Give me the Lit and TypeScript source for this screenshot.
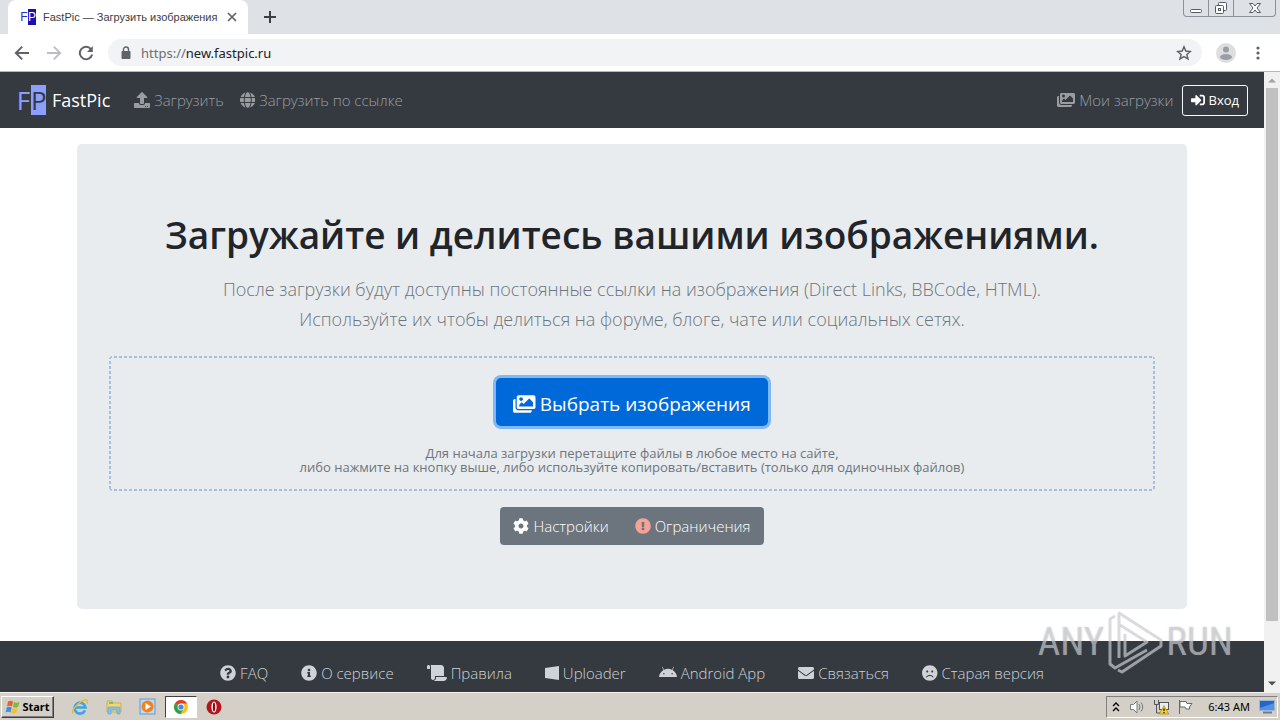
import { LitElement, html, css, svg } from "lit";
import { customElement, property } from "lit/decorators.js";

interface Glyph {
  w: number;
  d: string;
}

const GLYPHS: Record<string, Glyph> = {
  upload: {
    w: 512,
    d: "M296 384h-80c-13.3 0-24-10.7-24-24V192h-87.7c-17.8 0-26.7-21.5-14.1-34.1L242.3 5.7c7.5-7.5 19.8-7.5 27.3 0l152.2 152.2c12.6 12.6 3.7 34.1-14.1 34.1H320v168c0 13.3-10.7 24-24 24zm216-8v112c0 13.3-10.7 24-24 24H24c-13.3 0-24-10.7-24-24V376c0-13.3 10.7-24 24-24h136v8c0 30.9 25.1 56 56 56h80c30.9 0 56-25.1 56-56v-8h136c13.3 0 24 10.7 24 24zm-124 88c0-11-9-20-20-20s-20 9-20 20 9 20 20 20 20-9 20-20zm64 0c0-11-9-20-20-20s-20 9-20 20 9 20 20 20 20-9 20-20z",
  },
  globe: {
    w: 496,
    d: "M336.5 160C322 70.7 287.8 8 248 8s-74 62.7-88.5 152h177zM152 256c0 22.2 1.2 43.5 3.3 64h185.3c2.1-20.5 3.3-41.8 3.3-64s-1.2-43.5-3.3-64H155.3c-2.1 20.5-3.3 41.8-3.3 64zm324.7-96c-28.6-67.9-86.5-120.4-158-141.6 24.4 33.8 41.2 84.7 50 141.6h108zM177.2 18.4C105.8 39.6 47.8 92.1 19.3 160h108c8.7-56.9 25.5-107.8 49.9-141.6zM487.4 192H372.7c2.1 21 3.3 42.5 3.3 64s-1.2 43-3.3 64h114.6c5.5-20.5 8.6-41.8 8.6-64s-3.1-43.5-8.5-64zM120 256c0-21.5 1.2-43 3.3-64H8.6C3.2 212.5 0 233.8 0 256s3.2 43.5 8.6 64h114.6c-2-21-3.2-42.5-3.2-64zm39.5 96c14.5 89.3 48.7 152 88.5 152s74-62.7 88.5-152h-177zm159.3 141.6c71.4-21.2 129.4-73.7 158-141.6h-108c-8.8 56.9-25.6 107.8-50 141.6zM19.3 352c28.6 67.9 86.5 120.4 158 141.6-24.4-33.8-41.2-84.7-50-141.6h-108z",
  },
  images: {
    w: 576,
    d: "M480 416v16c0 26.51-21.49 48-48 48H48c-26.51 0-48-21.49-48-48V176c0-26.51 21.49-48 48-48h16v208c0 44.112 35.888 80 80 80h336zm96-80V80c0-26.51-21.49-48-48-48H144c-26.51 0-48 21.49-48 48v256c0 26.51 21.49 48 48 48h384c26.51 0 48-21.49 48-48zM256 128c0 26.51-21.49 48-48 48s-48-21.49-48-48 21.49-48 48-48 48 21.49 48 48zm-96 144l55.515-55.515c4.686-4.686 12.284-4.686 16.971 0L272 256l135.515-135.515c4.686-4.686 12.284-4.686 16.971 0L512 208v112H160v-48z",
  },
  login: {
    w: 512,
    d: "M416 448h-84c-6.6 0-12-5.4-12-12v-40c0-6.6 5.4-12 12-12h84c17.7 0 32-14.3 32-32V160c0-17.7-14.3-32-32-32h-84c-6.6 0-12-5.4-12-12V76c0-6.6 5.4-12 12-12h84c53 0 96 43 96 96v192c0 53-43 96-96 96zm-47-201L201 79c-15-15-41-4.5-41 17v96H24c-13.3 0-24 10.7-24 24v96c0 13.3 10.7 24 24 24h136v96c0 21.5 26 32 41 17l168-168c9.3-9.4 9.3-24.6 0-34z",
  },
  cog: {
    w: 512,
    d: "M487.4 315.7l-42.6-24.6c4.3-23.2 4.3-47 0-70.2l42.6-24.6c4.9-2.8 7.1-8.6 5.5-14-11.1-35.6-30-67.8-54.7-94.6-3.8-4.1-10-5.1-14.8-2.3L380.8 110c-17.9-15.4-38.5-27.3-60.8-35.1V25.8c0-5.6-3.9-10.5-9.4-11.7-36.7-8.2-74.3-7.8-109.2 0-5.5 1.2-9.4 6.1-9.4 11.7V75c-22.2 7.9-42.8 19.8-60.8 35.1L88.7 85.5c-4.9-2.8-11-1.9-14.8 2.3-24.7 26.7-43.6 58.9-54.7 94.6-1.7 5.4.6 11.2 5.5 14L67.3 221c-4.3 23.2-4.3 47 0 70.2l-42.6 24.6c-4.9 2.8-7.1 8.6-5.5 14 11.1 35.6 30 67.8 54.7 94.6 3.8 4.1 10 5.1 14.8 2.3l42.6-24.6c17.9 15.4 38.5 27.3 60.8 35.1v49.2c0 5.6 3.9 10.5 9.4 11.7 36.7 8.2 74.3 7.8 109.2 0 5.5-1.2 9.4-6.1 9.4-11.7v-49.2c22.2-7.9 42.8-19.8 60.8-35.1l42.6 24.6c4.9 2.8 11 1.9 14.8-2.3 24.7-26.7 43.6-58.9 54.7-94.6 1.5-5.5-.7-11.3-5.6-14.1zM256 336c-44.1 0-80-35.9-80-80s35.9-80 80-80 80 35.9 80 80-35.9 80-80 80z",
  },
  warning: {
    w: 512,
    d: "M504 256c0 136.997-111.043 248-248 248S8 392.997 8 256C8 119.083 119.043 8 256 8s248 111.083 248 248zm-248 50c-25.405 0-46 20.595-46 46s20.595 46 46 46 46-20.595 46-46-20.595-46-46-46zm-43.673-165.346l7.418 136c.347 6.364 5.609 11.346 11.982 11.346h48.546c6.373 0 11.635-4.982 11.982-11.346l7.418-136c.375-6.874-5.098-12.654-11.982-12.654h-63.383c-6.884 0-12.356 5.78-11.981 12.654z",
  },
  question: {
    w: 512,
    d: "M504 256c0 136.997-111.043 248-248 248S8 392.997 8 256C8 119.083 119.043 8 256 8s248 111.083 248 248zM262.655 90c-54.497 0-89.255 22.957-116.549 63.758-3.536 5.286-2.353 12.415 2.715 16.258l34.699 26.31c5.205 3.947 12.621 3.008 16.665-2.122 17.864-22.658 30.113-35.797 57.303-35.797 20.429 0 45.698 13.148 45.698 32.958 0 14.976-12.363 22.667-32.534 33.976C247.128 238.528 216 254.941 216 296v4c0 6.627 5.373 12 12 12h56c6.627 0 12-5.373 12-12v-1.333c0-28.462 83.186-29.647 83.186-106.667 0-58.002-60.165-102-116.531-102zM256 338c-25.365 0-46 20.635-46 46 0 25.364 20.635 46 46 46s46-20.636 46-46c0-25.365-20.635-46-46-46z",
  },
  info: {
    w: 512,
    d: "M256 8C119.043 8 8 119.083 8 256c0 136.997 111.043 248 248 248s248-111.003 248-248C504 119.083 392.957 8 256 8zm0 110c23.196 0 42 18.804 42 42s-18.804 42-42 42-42-18.804-42-42 18.804-42 42-42zm56 254c0 6.627-5.373 12-12 12h-88c-6.627 0-12-5.373-12-12v-24c0-6.627 5.373-12 12-12h12v-64h-12c-6.627 0-12-5.373-12-12v-24c0-6.627 5.373-12 12-12h64c6.627 0 12 5.373 12 12v100h12c6.627 0 12 5.373 12 12v24z",
  },
  scroll: {
    w: 640,
    d: "M48 0C21.53 0 0 21.53 0 48v64c0 8.84 7.16 16 16 16h80V48C96 21.53 74.47 0 48 0zm208 412.57V352h288V96c0-52.94-43.06-96-96-96H111.59C121.74 13.41 128 29.92 128 48v368c0 38.87 34.65 69.65 74.75 63.12C234.22 474 256 444.46 256 412.57zM288 384v32c0 52.93-43.06 96-96 96h336c61.86 0 112-50.14 112-112 0-8.84-7.16-16-16-16H288z",
  },
  windows: { w: 448, d: "M0 93.7L448 32v448L0 418.3z" },
  android: {
    w: 576,
    d: "M420.55,301.93a24,24,0,1,1,24-24,24,24,0,0,1-24,24m-265.1,0a24,24,0,1,1,24-24,24,24,0,0,1-24,24m273.7-144.48,47.94-83a10,10,0,1,0-17.27-10h0l-48.54,84.07a301.25,301.25,0,0,0-246.56,0L116.18,64.45a10,10,0,1,0-17.27,10h0l47.94,83C64.53,202.22,8.24,285.55,0,384H576c-8.24-98.45-64.54-181.78-146.85-226.55",
  },
  envelope: {
    w: 512,
    d: "M502.3 190.8c3.9-3.1 9.7-.2 9.7 4.7V400c0 26.5-21.5 48-48 48H48c-26.5 0-48-21.5-48-48V195.6c0-5 5.7-7.8 9.7-4.7 22.4 17.4 52.1 39.5 154.1 113.6 21.1 15.4 56.7 47.8 92.2 47.6 35.7.3 72-32.8 92.3-47.6 102-74.1 131.6-96.3 154-113.7zM256 320c23.2.4 56.6-29.2 73.4-41.4 132.7-96.3 142.8-104.7 173.4-128.7 5.8-4.5 9.2-11.5 9.2-18.9v-19c0-26.5-21.5-48-48-48H48c-26.5 0-48 21.5-48 48v19c0 7.4 3.4 14.3 9.2 18.9 30.6 23.9 40.7 32.4 173.4 128.7 16.8 12.2 50.2 41.8 73.4 41.4z",
  },
  frown: {
    w: 496,
    d: "M248 8C111 8 0 119 0 256s111 248 248 248 248-111 248-248S385 8 248 8zm80 168c17.7 0 32 14.3 32 32s-14.3 32-32 32-32-14.3-32-32 14.3-32 32-32zm-160 0c17.7 0 32 14.3 32 32s-14.3 32-32 32-32-14.3-32-32 14.3-32 32-32zm170.2 218.2C315.8 367.4 282.9 352 248 352s-67.8 15.4-90.2 42.2c-13.5 16.3-38.1-4.2-24.6-20.5C161.7 339.6 203.6 320 248 320s86.3 19.6 114.7 53.8c13.6 16.2-11 36.7-24.5 20.4z",
  },
};

@customElement("fa-icon")
class FaIcon extends LitElement {
  @property() name = "";
  static styles = css`
    :host {
      display: inline-flex;
      flex: none;
    }
    svg {
      display: block;
      height: 1em;
      fill: currentColor;
    }
  `;
  render() {
    const g = GLYPHS[this.name];
    return html`<svg viewBox="0 0 ${g.w} 512" aria-hidden="true">${svg`<path d=${g.d}></path>`}</svg>`;
  }
}

@customElement("browser-chrome")
class BrowserChrome extends LitElement {
  static styles = css`
    :host {
      display: block;
      flex: none;
      font-family: "Noto Sans", sans-serif;
    }
    button {
      border: 0;
      background: none;
      padding: 0;
      margin: 0;
      display: flex;
      align-items: center;
      justify-content: center;
      color: #5f6368;
      font: inherit;
    }
    svg {
      display: block;
    }
    .strip {
      display: flex;
      height: 34px;
      background: #dee1e6;
      padding-left: 8px;
    }
    .tab {
      display: flex;
      align-items: center;
      width: 240px;
      box-sizing: border-box;
      padding: 0 10px 0 12px;
      background: #fff;
      border-radius: 8px 8px 0 0;
      font-family: "Liberation Sans", sans-serif;
      font-size: 11px;
      color: #3c4043;
    }
    .favicon {
      display: flex;
      width: 16px;
      height: 16px;
      margin-right: 7px;
      font-size: 12px;
      line-height: 16px;
      color: #2a2ac0;
    }
    .favicon span {
      width: 8px;
      text-align: center;
    }
    .favicon .inv {
      background: #1a0fb0;
      color: #fff;
    }
    .title {
      flex: 1;
      white-space: nowrap;
    }
    .plus {
      width: 44px;
    }
    .wctl {
      display: flex;
      margin-left: auto;
      margin-right: 4px;
      height: 17px;
      box-sizing: border-box;
      border: 1px solid #8b9199;
      border-top: 0;
      border-radius: 0 0 4px 4px;
    }
    .wctl button {
      width: 25px;
      border-right: 1px solid #8b9199;
    }
    .wctl button:last-child {
      width: 41px;
      border-right: 0;
    }
    .bar {
      display: flex;
      align-items: center;
      height: 38px;
      box-sizing: border-box;
      background: #fff;
      border-bottom: 1px solid #b5b7ba;
      padding: 0 6px;
    }
    .nav {
      width: 32px;
      height: 32px;
    }
    .omni {
      flex: 1;
      display: flex;
      align-items: center;
      height: 27px;
      margin: 0 8px 0 6px;
      padding: 0 10px 0 12px;
      border-radius: 14px;
      background: #f1f3f4;
      font-size: 13px;
      color: #6a6e73;
    }
    .lock {
      margin-right: 9px;
    }
    input {
      flex: 1;
      min-width: 0;
      border: 0;
      padding: 0;
      background: none;
      outline: 0;
      font: inherit;
      color: #202124;
    }
    .more {
      width: 32px;
    }
    .me {
      width: 32px;
    }
  `;
  render() {
    return html`
      <div class="strip">
        <div class="tab">
          <span class="favicon" aria-hidden="true"><span>F</span><span class="inv">P</span></span>
          <span class="title">FastPic — Загрузить изображения</span>
          <button aria-label="Close tab">
            <svg width="12" height="12" viewBox="0 0 12 12" stroke="#5f6368" stroke-width="1.7"><path d="M2 2l8 8M10 2l-8 8" /></svg>
          </button>
        </div>
        <button class="plus" aria-label="New tab">
          <svg width="14" height="14" viewBox="0 0 14 14" stroke="#3c4043" stroke-width="2"><path d="M7 1v12M1 7h12" /></svg>
        </button>
        <div class="wctl">
          <button aria-label="Minimize">
            <svg width="14" height="14" viewBox="0 0 14 14" fill="#fff" stroke="#555b66"><rect x="1.5" y="8.5" width="11" height="3" rx="1" /></svg>
          </button>
          <button aria-label="Restore">
            <svg width="14" height="14" viewBox="0 0 14 14" fill="#fff" stroke="#555b66"><rect x="4.500" y="1.500" width="8" height="8" rx="1" /><rect x="1.500" y="4.500" width="8" height="8" rx="1" /><rect x="4.500" y="7.500" width="2" height="2" /></svg>
          </button>
          <button aria-label="Close">
            <svg width="14" height="14" viewBox="0 0 14 14" fill="#fff" stroke="#555b66"><path d="M1.500 2.500h3.500l2 2.500 2-2.500h3.500l-3.500 4.500 3.500 4.500h-3.500l-2-2.500-2 2.500h-3.500l3.500-4.500z" /></svg>
          </button>
        </div>
      </div>
      <div class="bar">
        <button class="nav" aria-label="Back">
          <svg width="16" height="16" viewBox="0 0 16 16" fill="none" stroke="#5f6368" stroke-width="1.900"><path d="M15 8H2M8.200 1.600L1.800 8l6.400 6.400" /></svg>
        </button>
        <button class="nav" aria-label="Forward">
          <svg width="16" height="16" viewBox="0 0 16 16" fill="none" stroke="#bcbec1" stroke-width="1.900"><path d="M1 8h13M7.800 1.600L14.200 8l-6.400 6.400" /></svg>
        </button>
        <button class="nav" aria-label="Reload">
          <svg width="16" height="16" viewBox="0 0 16 16" fill="none" stroke="#5f6368" stroke-width="2"><path d="M13 4.300A6.200 6.200 0 1 0 14.100 9.500" /><path d="M14.800 1v6H9z" fill="#5f6368" stroke="none" /></svg>
        </button>
        <div class="omni">
          <svg class="lock" width="12" height="14" viewBox="0 0 12 14"><rect x="1.500" y="5" width="9" height="8" rx="1" fill="#5f6368" /><path d="M3.500 5V3.500a2.500 2.500 0 0 1 5 0V5" fill="none" stroke="#5f6368" stroke-width="1.400" /></svg>
          <label for="url">https://</label>
          <input id="url" value="new.fastpic.ru" />
          <button aria-label="Bookmark">
            <svg width="16" height="16" viewBox="0 0 16 16" fill="none" stroke="#5f6368" stroke-width="1.500"><path d="M8 1.800l1.800 4.300 4.600.4-3.500 3 1.100 4.500-4-2.400L4 14l1.100-4.500-3.500-3 4.600-.4z" /></svg>
          </button>
        </div>
        <button class="me" aria-label="Profile">
          <svg width="20" height="20" viewBox="0 0 20 20"><circle cx="10" cy="10" r="10" fill="#dcdee0" /><circle cx="10" cy="6.500" r="3" fill="#9b9ea2" /><ellipse cx="10" cy="14" rx="6" ry="3" fill="#9b9ea2" /></svg>
        </button>
        <button class="more" aria-label="Menu">
          <svg width="4" height="14" viewBox="0 0 4 14" fill="#5f6368"><circle cx="2" cy="2" r="1.600" /><circle cx="2" cy="7" r="1.600" /><circle cx="2" cy="12" r="1.600" /></svg>
        </button>
      </div>
    `;
  }
}

@customElement("fast-pic-page")
class FastPicPage extends LitElement {
  static styles = css`
    :host {
      display: block;
      flex: 1;
      min-width: 0;
      overflow: hidden;
      background: #fff;
      font-family: "Open Sans", "Noto Sans", sans-serif;
      font-size: 15px;
      font-weight: 300;
      line-height: 24px;
      color: #212529;
    }
    a {
      color: inherit;
      text-decoration: none;
      display: flex;
      align-items: center;
      gap: 4px;
      white-space: nowrap;
    }
    fa-icon {
      font-size: 16px;
    }
    button {
      font: inherit;
      color: #fff;
      display: flex;
      align-items: center;
      justify-content: center;
      gap: 4px;
      border: 0;
      margin: 0;
      white-space: nowrap;
    }
    header {
      display: flex;
      align-items: center;
      gap: 16px;
      height: 56px;
      padding: 0 16px;
      background: #343a40;
      color: #9a9da0;
    }
    .brand {
      font-size: 18px;
      font-weight: 400;
      color: #fff;
      gap: 6px;
      margin-right: 8px;
    }
    .mark {
      display: flex;
      width: 30px;
      height: 30px;
      line-height: 30px;
      font-size: 26px;
      color: #8c9eff;
    }
    .mark span {
      width: 15px;
      text-align: center;
    }
    .mark .inv {
      background: #8c9eff;
      color: #343a40;
    }
    .right {
      margin-left: auto;
      display: flex;
      align-items: center;
      gap: 8px;
    }
    .login {
      height: 31px;
      padding: 0 8px;
      border: 1px solid #f8f9fa;
      border-radius: 3px;
      background: none;
      font-size: 13px;
      font-weight: 400;
    }
    .login fa-icon {
      font-size: 14px;
    }
    main {
      max-width: 1110px;
      box-sizing: border-box;
      margin: 16px auto 32px;
      padding: 64px 32px;
      border-radius: 5px;
      background: #e9ecef;
      text-align: center;
    }
    h1 {
      margin: 0 0 12px;
      font-size: 37px;
      line-height: 54px;
      font-weight: 600;
    }
    .lead {
      margin: 0;
      font-size: 18px;
      line-height: 30px;
      color: #6c757d;
    }
    .drop {
      --across: repeating-linear-gradient(90deg, #a6bedb 0 3px, transparent 3px 5px);
      --down: repeating-linear-gradient(#a6bedb 0 3px, transparent 3px 5px);
      margin: 22px 0 16px;
      padding: 22px 18px 17px;
      background-image: var(--across), var(--across), var(--down), var(--down);
      background-size: 100% 2px, 100% 2px, 2px 100%, 2px 100%;
      background-position: top, bottom, left, right;
      background-repeat: no-repeat;
      border-radius: 4px;
      display: flex;
      flex-direction: column;
      align-items: center;
    }
    .pick {
      height: 48px;
      padding: 4px 17px 0;
      border-radius: 5px;
      background: #0069d9;
      box-shadow: 0 0 0 3px #80b8f7;
      font-size: 19px;
      font-weight: 400;
    }
    .pick fa-icon {
      font-size: 20px;
    }
    .hint {
      margin: 20px 0 0;
      font-size: 13px;
      line-height: 14px;
      font-weight: 400;
      color: #6c757d;
    }
    .group {
      display: inline-flex;
      border-radius: 4px;
      overflow: hidden;
      vertical-align: top;
    }
    .group button {
      height: 38px;
      padding: 0 13px;
      background: #6c757d;
    }
    .group .limit {
      color: #f5a397;
    }
    footer {
      display: flex;
      justify-content: center;
      gap: 33px;
      padding: 20px 0 40px;
      background: #343a40;
      color: #cfd2d6;
    }
  `;
  private links = [
    ["question", "FAQ"],
    ["info", "О сервисе"],
    ["scroll", "Правила"],
    ["windows", "Uploader"],
    ["android", "Android App"],
    ["envelope", "Связаться"],
    ["frown", "Старая версия"],
  ];
  render() {
    return html`
      <header>
        <a class="brand" href="#"><span class="mark" aria-hidden="true"><span>F</span><span class="inv">P</span></span>FastPic</a>
        <a href="#"><fa-icon name="upload"></fa-icon>Загрузить</a>
        <a href="#"><fa-icon name="globe"></fa-icon>Загрузить по ссылке</a>
        <div class="right">
          <a href="#"><fa-icon name="images"></fa-icon>Мои загрузки</a>
          <button class="login"><fa-icon name="login"></fa-icon>Вход</button>
        </div>
      </header>
      <main>
        <h1>Загружайте и делитесь вашими изображениями.</h1>
        <p class="lead">
          После загрузки будут доступны постоянные ссылки на изображения (Direct Links, BBCode, HTML).<br />
          Используйте их чтобы делиться на форуме, блоге, чате или социальных сетях.
        </p>
        <section class="drop">
          <button class="pick"><fa-icon name="images"></fa-icon>Выбрать изображения</button>
          <p class="hint">
            Для начала загрузки перетащите файлы в любое место на сайте,<br />
            либо нажмите на кнопку выше, либо используйте копировать/вставить (только для одиночных файлов)
          </p>
        </section>
        <div class="group">
          <button><fa-icon name="cog"></fa-icon>Настройки</button>
          <button><fa-icon class="limit" name="warning"></fa-icon>Ограничения</button>
        </div>
      </main>
      <footer>
        ${this.links.map(([icon, label]) => html`<a href="#"><fa-icon name=${icon}></fa-icon>${label}</a>`)}
      </footer>
    `;
  }
}

@customElement("task-bar")
class TaskBar extends LitElement {
  static styles = css`
    :host {
      display: flex;
      flex: none;
      align-items: center;
      height: 28px;
      box-sizing: border-box;
      padding: 0 2px 0 1px;
      background: #d4d0c8;
      border-top: 1px solid #f4f2ee;
      font-family: "Noto Sans", sans-serif;
      font-size: 11px;
      color: #000;
    }
    button {
      display: flex;
      align-items: center;
      justify-content: center;
      border: 0;
      padding: 0;
      margin: 0;
      background: none;
      font: inherit;
      color: inherit;
    }
    svg {
      display: block;
    }
    .start {
      width: 53px;
      height: 22px;
      gap: 1px;
      border: 1px solid;
      border-color: #fff #404040 #404040 #fff;
      box-shadow: inset -1px -1px 0 #808080;
      font-weight: 700;
    }
    .apps {
      display: flex;
      margin-left: 9px;
    }
    .apps button {
      width: 34px;
      height: 22px;
    }
    .apps .on {
      width: 32px;
      box-sizing: border-box;
      background: #fff;
      border: 1px solid;
      border-color: #404040 #fff #fff #404040;
    }
    .tray {
      margin-left: auto;
      display: flex;
      align-items: center;
      gap: 8px;
      height: 22px;
      box-sizing: border-box;
      padding: 0 2px 0 4px;
      border: 1px solid;
      border-color: #808080 #fff #fff #808080;
    }
    time {
      margin: 0 1px 0 7px;
      white-space: nowrap;
    }
  `;
  render() {
    return html`
      <button class="start">
        <svg width="16" height="16" viewBox="0 0 16 16">
          <path d="M3 2.500q2.500-1.500 5 0L7 7.500q-2.500-1.500-5 0z" fill="#e8602c" />
          <path d="M8.800 3q2.500 1.300 5.700 0l-1.500 5q-2.700 1-5 0z" fill="#7fba3c" />
          <path d="M1.700 8.500q2.500-1.500 5 0l-1.200 5q-2.500-1.500-4.800 0z" fill="#3b8fe0" />
          <path d="M7.500 9q2.500 1.300 5.300 0l-1.300 4.800q-2.700 1.200-5.200 0z" fill="#f6c02c" />
        </svg>
        Start
      </button>
      <nav class="apps">
        <button aria-label="Internet Explorer">
          <svg width="18" height="18" viewBox="0 0 18 18" fill="none"><path d="M14 12.500a5.500 5.500 0 1 1 .5-3H4.500" stroke="#3aa5e8" stroke-width="2.600" /><path d="M2 15.500C-.5 12 10 1.500 15.500 2c1.500.5 1 2.500.3 3.500" stroke="#e7b93a" stroke-width="1.400" /></svg>
        </button>
        <button aria-label="Explorer">
          <svg width="18" height="18" viewBox="0 0 18 18"><path d="M2 3h5l1 2h8v9H2z" fill="#f2d675" stroke="#cfae4d" /><path d="M4 4h4v2H4z" fill="#7ebf6a" /><path d="M3 16V10q0-1 1-1h10q1 0 1 1v6h-3v-4H6v4z" fill="#7fc3ec" stroke="#5a9fd0" stroke-width=".6" /></svg>
        </button>
        <button aria-label="Media Player">
          <svg width="18" height="18" viewBox="0 0 18 18"><rect x="1" y="1" width="15" height="15" fill="#b9dcf5" stroke="#5c9bd2" /><circle cx="8.500" cy="8.500" r="6" fill="#f4801f" /><path d="M6.500 5l5.500 3.500-5.500 3.500z" fill="#fff" /></svg>
        </button>
        <button class="on" aria-label="Chrome">
          <svg width="16" height="16" viewBox="0 0 16 16"><circle cx="8" cy="8" r="7" fill="#fbc116" /><path d="M8 8L1.900 4.500A7 7 0 0 1 14.100 4.600H8z" fill="#e33b2e" /><path d="M8 8L1.900 4.500A7 7 0 0 0 7.500 15l3-5z" fill="#2ca24c" /><circle cx="8" cy="8" r="3.400" fill="#fff" /><circle cx="8" cy="8" r="2.600" fill="#4587f0" /></svg>
        </button>
        <button aria-label="Opera">
          <svg width="16" height="16" viewBox="0 0 16 16"><circle cx="8" cy="8" r="7.500" fill="#b5141b" /><ellipse cx="8" cy="8" rx="2.600" ry="5.600" fill="#fff" /><ellipse cx="8" cy="8" rx="1.200" ry="4.600" fill="#8c0d12" /></svg>
        </button>
      </nav>
      <div class="tray">
        <svg width="10" height="12" viewBox="0 0 10 12" fill="none" stroke="#000" stroke-width="1.300"><path d="M2 5l3-3 3 3M2 10l3-3 3 3" /></svg>
        <svg width="16" height="16" viewBox="0 0 16 16" fill="#fff" stroke="#77797c"><path d="M1.500 5.500h3l3.500-3.500v12l-3.500-3.500h-3z" /><path d="M10 5q2 3 0 6M12 3.500q3.500 4.500 0 9" fill="none" /></svg>
        <svg width="16" height="16" viewBox="0 0 16 16"><path d="M1.500 1v4.500h4V1M3.500 5.500V14h5" fill="none" stroke="#555" /><rect x="6.500" y="3.500" width="9" height="7" fill="#e8eef4" stroke="#555" /><path d="M11 6.500l4.700 8.500H6.300z" fill="#ffd21a" stroke="#9c7b00" stroke-width=".6" /><path d="M11 9.500v2.500M11 13v1.200" stroke="#000" stroke-width="1.200" /></svg>
        <svg width="16" height="16" viewBox="0 0 16 16" fill="#fff" stroke="#66686b"><path d="M2.500 1v14" /><path d="M3 2.500h6l1 2h5l-2.500 3.500 0 2H9l-1-2H3z" /></svg>
        <time>6:43 AM</time>
        <svg width="16" height="14" viewBox="0 0 16 14"><rect x=".5" y=".5" width="15" height="10" fill="#2467c9" stroke="#9fb4cf" /><path d="M1 8l14-5v7H1z" fill="#4f92e8" /><path d="M4 12.500h9" stroke="#6f7b88" stroke-width="2" /></svg>
      </div>
    `;
  }
}

@customElement("app-root")
class AppRoot extends LitElement {
  static styles = css`
    :host {
      display: flex;
      flex-direction: column;
      height: 100vh;
      overflow: hidden;
      position: relative;
    }
    .view {
      display: flex;
      flex: 1;
      min-height: 0;
    }
    .scroll {
      flex: none;
      width: 16px;
      display: flex;
      flex-direction: column;
      background: #f1f1f1;
    }
    .scroll svg {
      display: block;
      flex: none;
    }
    .thumb {
      height: 86%;
      margin: 0 2px;
      background: #c1c1c1;
    }
    .scroll .down {
      margin-top: auto;
    }
    .mark {
      position: absolute;
      right: 47px;
      bottom: 46px;
      display: flex;
      align-items: center;
      gap: 3px;
      font-family: "Liberation Sans Narrow", "Roboto Condensed", "Roboto", sans-serif;
      font-size: 39px;
      line-height: 64px;
      color: rgba(205, 208, 212, 0.65);
      text-shadow: 0 0 2px rgba(120, 120, 120, 0.35);
      pointer-events: none;
    }
  `;
  render() {
    return html`
      <browser-chrome></browser-chrome>
      <div class="view">
        <fast-pic-page></fast-pic-page>
        <div class="scroll">
          <svg width="16" height="16" viewBox="0 0 16 16"><path d="M4 10.500h8l-4-4z" fill="#a3a3a3" /></svg>
          <div class="thumb"></div>
          <svg class="down" width="16" height="16" viewBox="0 0 16 16"><path d="M4 5.500h8l-4 4z" fill="#505050" /></svg>
        </div>
      </div>
      <task-bar></task-bar>
      <div class="mark" aria-hidden="true">
        <span>ANY</span>
        <svg width="56" height="64" viewBox="0 0 56 64" fill="none" stroke="#c9ccd0" stroke-opacity="0.7" stroke-width="3" stroke-linejoin="round">
          <path d="M8 6L3 9v45l5 4 32-18" />
          <path d="M18 24v22l22-14-27-17" />
          <path d="M12 48V3l42 27v6L15 62l-4-2" />
        </svg>
        <span>RUN</span>
      </div>
    `;
  }
}
